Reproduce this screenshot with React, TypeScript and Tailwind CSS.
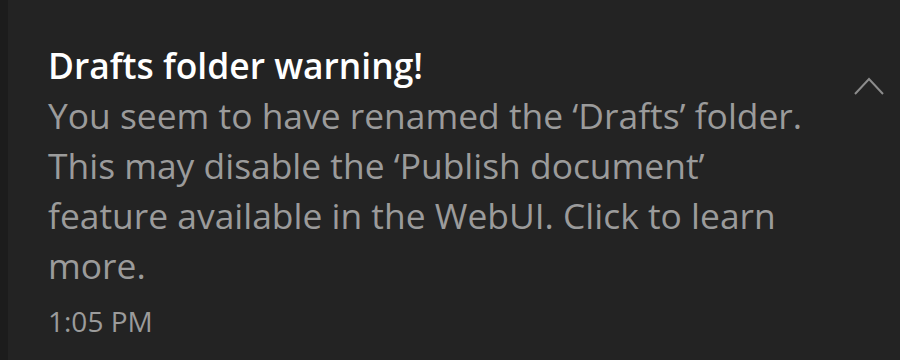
import React from 'react';

/* ================= DATA ================= */

const bodyLines: string[] = [
  'You seem to have renamed the ‘Drafts’ folder.',
  'This may disable the ‘Publish document’',
  'feature available in the WebUI. Click to learn',
  'more.',
];

/* ================= COMPONENT ================= */

const ChevronUp: React.FC = () => (
  <svg width="32" height="20" viewBox="0 0 32 20" fill="none" className="block">
    <path d="M2 18 L16 3 L30 18" stroke="#8c8c8c" strokeWidth="2" />
  </svg>
);

const App: React.FC = () => {
  return (
    <div
      className="flex w-[900px] h-[360px] bg-[#232323] overflow-hidden"
      style={{ fontFamily: '"Open Sans", "Noto Sans", sans-serif' }}
    >
      {/* dark edge */}
      <div className="w-[8px] bg-[#1c1c1c]" />

      <div className="flex flex-1 justify-between">
        {/* Text */}
        <div className="pl-[40px] pt-[40px]">
          <h3 className="text-[35.4px] leading-[50px] font-semibold text-white">
            Drafts folder warning!
          </h3>
          <p className="text-[35.4px] leading-[50px] text-[#9b9b9b]">
            {bodyLines.map((line) => (
              <span key={line} className="block whitespace-nowrap">
                {line}
              </span>
            ))}
          </p>
          <p className="mt-[11px] text-[28px] leading-[40px] text-[#9b9b9b]">1:05 PM</p>
        </div>

        {/* Collapse */}
        <div className="pt-[76px] pr-[15px]">
          <ChevronUp />
        </div>
      </div>
    </div>
  );
};

export default App;
